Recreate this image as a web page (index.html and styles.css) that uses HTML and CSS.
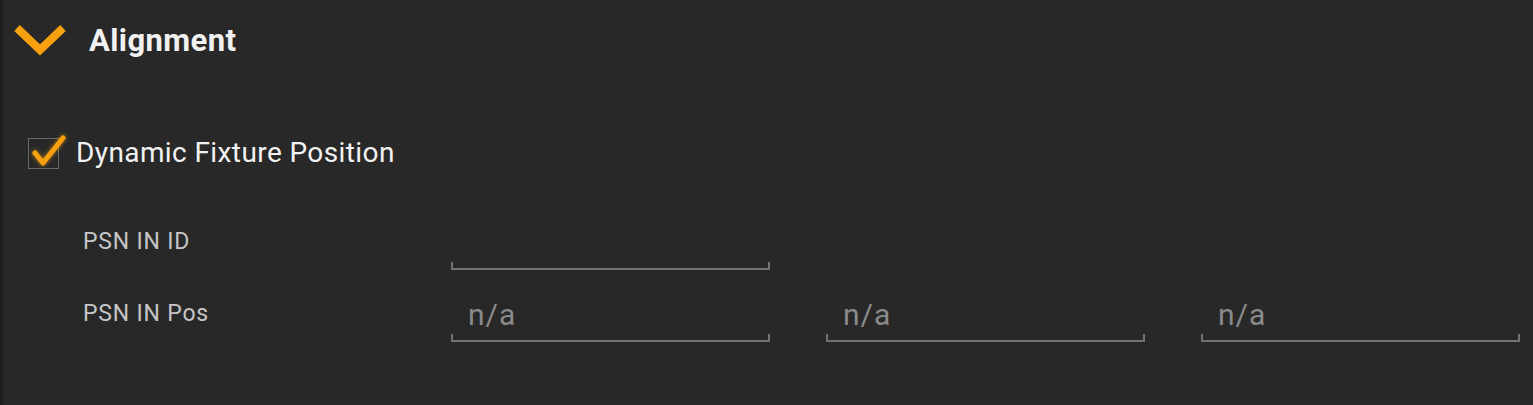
FILE: index.html
```html
<!DOCTYPE html>
<html>
<head>
<meta charset="utf-8">
<link rel="stylesheet" href="styles.css">
</head>
<body>
<div class="panel">
  <div class="header">
    <svg class="chevron" width="56" height="36" viewBox="0 0 56 36">
      <polyline points="3,5 26,27 49,5" fill="none" stroke="#f7a10f" stroke-width="8" stroke-linejoin="miter"/>
    </svg>
    <span class="title">Alignment</span>
  </div>
  <div class="check-row">
    <span class="checkbox">
      <svg class="checkmark" width="44" height="44" viewBox="0 0 44 44">
        <polyline points="7,24 15,34 35,9" fill="none" stroke="#f7a10f" stroke-width="5" stroke-linecap="round" stroke-linejoin="round"/>
      </svg>
    </span>
    <span class="check-label">Dynamic Fixture Position</span>
  </div>
  <div class="form">
    <div class="row">
      <div class="label">PSN IN ID</div>
      <div class="field"></div>
    </div>
    <div class="row">
      <div class="label">PSN IN Pos</div>
      <div class="field"><span class="placeholder">n/a</span></div>
      <div class="field"><span class="placeholder">n/a</span></div>
      <div class="field"><span class="placeholder">n/a</span></div>
    </div>
  </div>
</div>
</body>
</html>
```
FILE: styles.css
```css
html, body {
  margin: 0;
  padding: 0;
  background: #282828;
  height: 100%;
}
body {
  font-family: Roboto, "Liberation Sans", sans-serif;
  overflow: hidden;
}
.panel {
  height: 405px;
  border-left: 3px solid #1d1d1d;
  box-sizing: border-box;
}
.header {
  display: flex;
  align-items: center;
  height: 80px;
  padding-left: 11px;
}
.chevron {
  display: block;
  margin-top: 2px;
}
.title {
  margin-left: 19px;
  font-size: 31px;
  font-weight: 700;
  color: #f1f1f1;
  letter-spacing: 0.4px;
}
.check-row {
  display: flex;
  align-items: center;
  height: 60px;
  margin-top: 42px;
  padding-left: 25px;
}
.checkbox {
  position: relative;
  flex-shrink: 0;
  width: 29px;
  height: 29px;
  border: 1px solid #6a6a6a;
  margin-top: 2px;
}
.checkmark {
  position: absolute;
  left: -1px;
  top: -10px;
  filter: drop-shadow(0 0 2px rgba(247, 161, 15, 0.7));
}
.check-label {
  margin-left: 17px;
  font-size: 28px;
  letter-spacing: 0.4px;
  color: #f2f2f2;
}
.form {
  display: flex;
  flex-direction: column;
  gap: 32px;
  margin-top: 48px;
  padding-left: 80px;
}
.row {
  display: flex;
  height: 40px;
}
.label {
  flex-shrink: 0;
  width: 368px;
  font-size: 23px;
  letter-spacing: 0.8px;
  line-height: 24px;
  color: #c6c6c6;
}
.field {
  position: relative;
  flex-shrink: 0;
  width: 319px;
  height: 38px;
  border-bottom: 2px solid #727272;
  margin-right: 56px;
}
.field::before,
.field::after {
  content: "";
  position: absolute;
  bottom: -2px;
  width: 2px;
  height: 8px;
  background: #727272;
}
.field::before { left: 0; }
.field::after { right: 0; }
.placeholder {
  display: block;
  padding-left: 17px;
  font-size: 30px;
  letter-spacing: 1px;
  line-height: 26px;
  color: #8a8a8a;
}
```
